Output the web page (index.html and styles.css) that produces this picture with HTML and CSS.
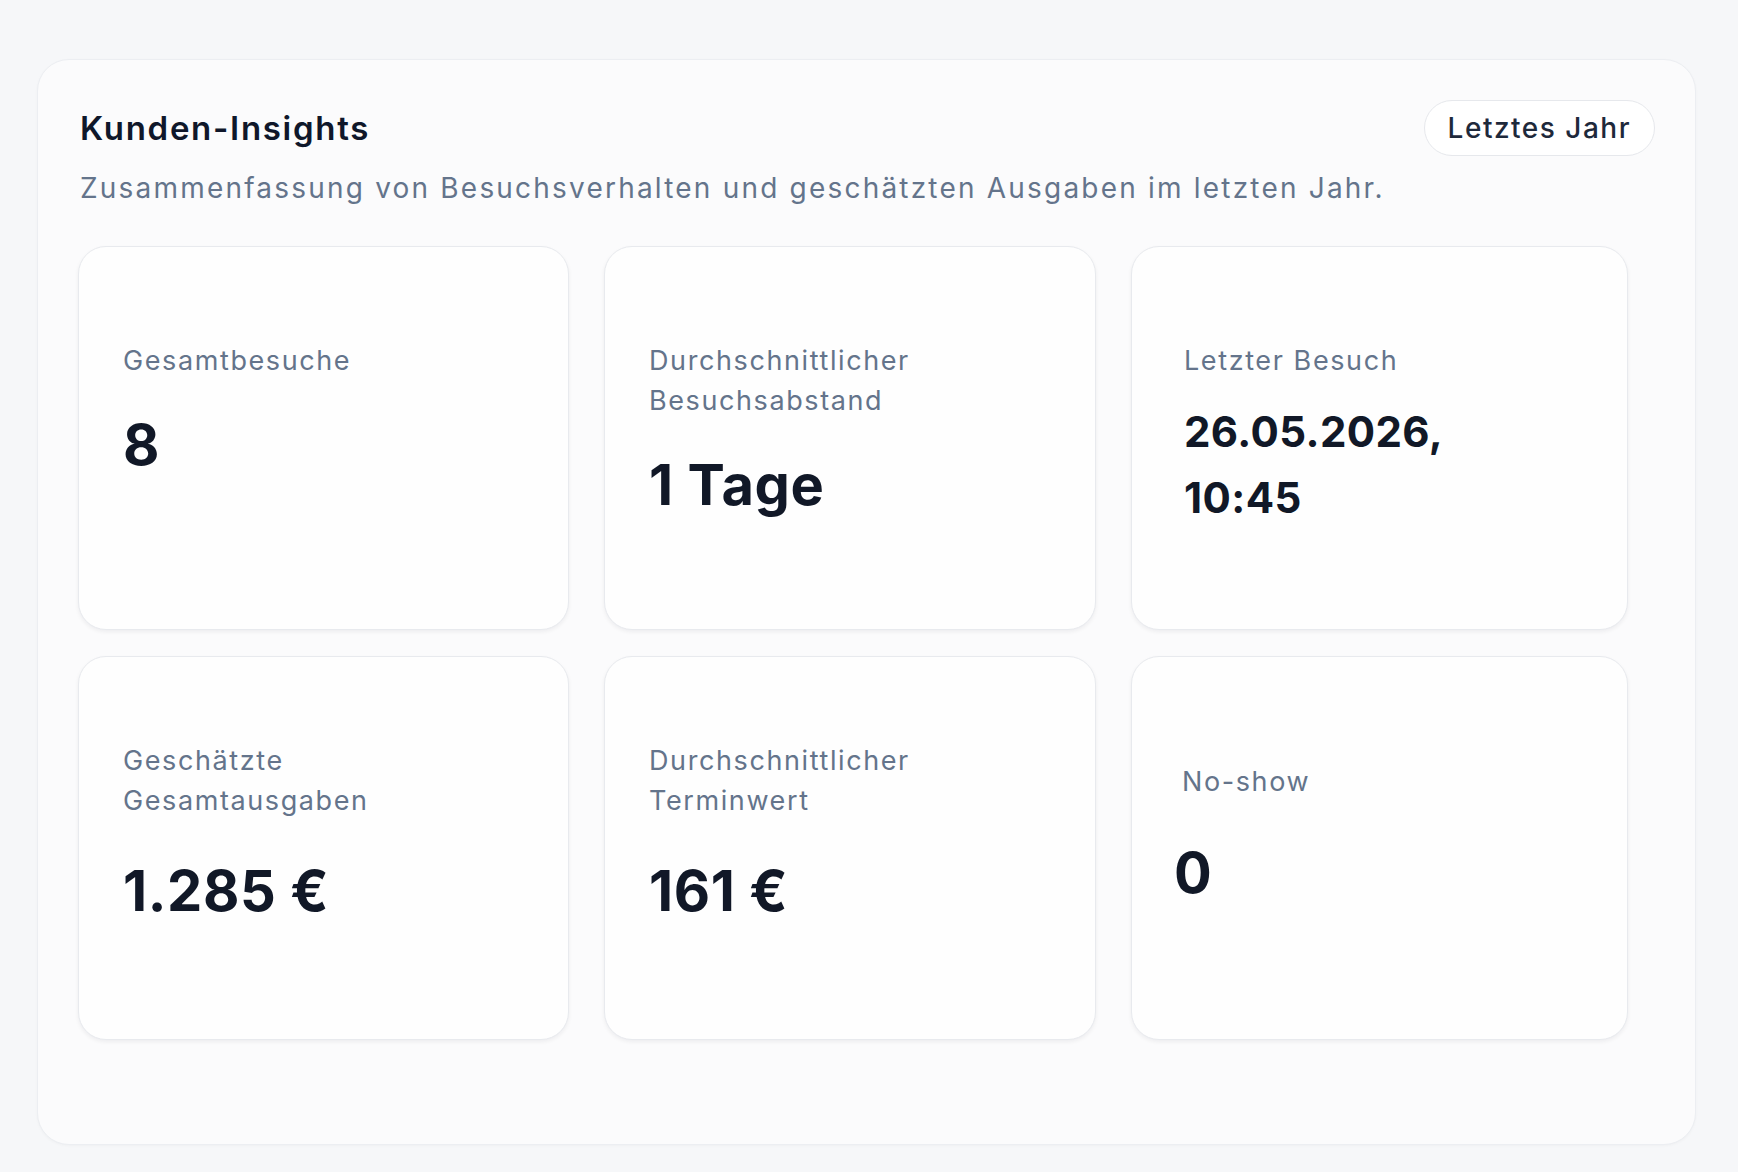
FILE: index.html
```html
<!DOCTYPE html>
<html lang="de">
<head>
    <meta charset="UTF-8">
    <meta name="viewport" content="width=device-width, initial-scale=1.0">
    <title>Kunden-Insights</title>
    <link rel="stylesheet" href="styles.css">
</head>
<body>

    <div class="page">
        <section class="insights">
            <div class="insights-head">
                <h2>Kunden-Insights</h2>
                <button type="button" class="range-btn">Letztes Jahr</button>
            </div>
            <p class="insights-sub">Zusammenfassung von Besuchsverhalten und geschätzten Ausgaben im letzten Jahr.</p>

            <div class="metrics">
                <div class="metric">
                    <div class="metric-label">Gesamtbesuche</div>
                    <div class="metric-value">8</div>
                </div>
                <div class="metric">
                    <div class="metric-label">Durchschnittlicher Besuchsabstand</div>
                    <div class="metric-value">1 Tage</div>
                </div>
                <div class="metric metric-date">
                    <div class="metric-label">Letzter Besuch</div>
                    <div class="metric-value">26.05.2026, 10:45</div>
                </div>
                <div class="metric metric-low">
                    <div class="metric-label">Geschätzte Gesamtausgaben</div>
                    <div class="metric-value">1.285 €</div>
                </div>
                <div class="metric metric-low">
                    <div class="metric-label">Durchschnittlicher Terminwert</div>
                    <div class="metric-value">161 €</div>
                </div>
                <div class="metric metric-single">
                    <div class="metric-label">No-show</div>
                    <div class="metric-value">0</div>
                </div>
            </div>
        </section>
    </div>

</body>
</html>
```

FILE: styles.css
```css
body {
    margin: 0;
    font-family: Inter, "Noto Sans", sans-serif;
    background-color: #f6f7f9;
    color: #0f172a;
}

.page {
    padding: 59px 42px 28px 37px;
}

.insights {
    background-color: #fbfbfc;
    border: 1px solid #eceef2;
    border-radius: 32px;
    padding: 40px 40px 104px 40px;
    box-shadow: 0 1px 3px rgba(15, 23, 42, 0.03);
}

.insights-head {
    display: flex;
    align-items: center;
    justify-content: space-between;
    height: 56px;
}

.insights-head h2 {
    margin: 0 0 0 2px;
    font-size: 33px;
    font-weight: 600;
    line-height: 40px;
    letter-spacing: 1.7px;
    color: #0f172a;
}

.range-btn {
    height: 56px;
    padding: 0 23px;
    font-family: inherit;
    font-size: 28px;
    font-weight: 500;
    letter-spacing: 1.5px;
    color: #1e293b;
    background-color: #fff;
    border: 1px solid #e6e8ec;
    border-radius: 28px;
}

.insights-sub {
    margin: 12px 0 0 2px;
    font-size: 28px;
    line-height: 40px;
    letter-spacing: 2.2px;
    color: #64748b;
}

.metrics {
    display: grid;
    grid-template-columns: 491px 492px 497px;
    grid-auto-rows: 384px;
    gap: 26px 35px;
    margin-top: 38px;
}

.metric {
    box-sizing: border-box;
    padding: 94px 44px 0;
    background-color: #fefefe;
    border: 1px solid #e8eaee;
    border-radius: 28px;
    box-shadow: 0 2px 4px rgba(15, 23, 42, 0.06);
}

.metric-label {
    width: 300px;
    font-size: 27px;
    line-height: 40px;
    letter-spacing: 1.6px;
    color: #64748b;
}

.metric-value {
    margin-top: 31px;
    font-size: 56px;
    font-weight: 700;
    line-height: 67px;
    letter-spacing: 0.6px;
    color: #111827;
}

/* date value wraps onto two lines, so it is set smaller */
.metric-date {
    padding-left: 52px;
}

.metric-date .metric-value {
    width: 260px;
    margin-top: 18px;
    font-size: 42px;
    line-height: 66px;
    letter-spacing: 0.4px;
}

.metric-low {
    padding-top: 84px;
}

.metric-low .metric-value {
    margin-top: 37px;
}

.metric-single {
    padding-top: 105px;
    padding-left: 50px;
}

.metric-single .metric-value {
    margin-top: 38px;
    margin-left: -8px;
}
```
